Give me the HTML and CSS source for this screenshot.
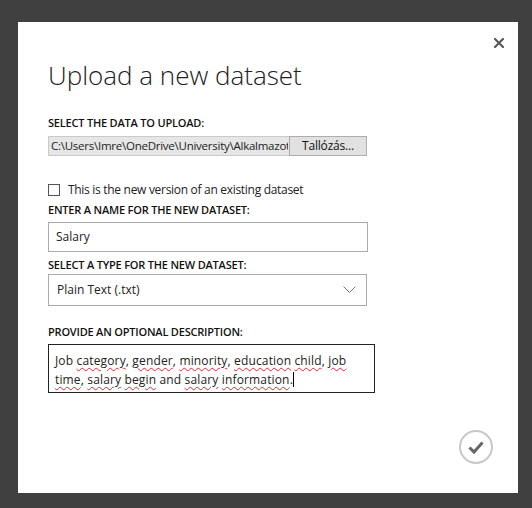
FILE: index.html
```html
<!DOCTYPE html>
<html>
<head>
<meta charset="utf-8">
<link rel="stylesheet" href="styles.css">
</head>
<body>
<div class="dialog">
  <button class="close" aria-label="Close">
    <svg width="10" height="10" viewBox="0 0 10 10"><path d="M1 1L9 9M9 1L1 9" stroke="#5a5a5a" stroke-width="2.2" stroke-linecap="square"/></svg>
  </button>
  <h1 class="title">Upload a new dataset</h1>
  <div class="label first">SELECT THE DATA TO UPLOAD:</div>
  <div class="file-row">
    <div class="file-path"><span class="path-text">C:\Users\Imre\OneDrive\University\Alkalmazott</span></div>
    <div class="browse">Tallózás...</div>
  </div>
  <div class="check-row"><span class="box"></span><span class="check-text">This is the new version of an existing dataset</span></div>
  <div class="label l2">ENTER A NAME FOR THE NEW DATASET:</div>
  <div class="input">Salary</div>
  <div class="label l3">SELECT A TYPE FOR THE NEW DATASET:</div>
  <div class="select"><span>Plain Text (.txt)</span>
    <svg width="13" height="8" viewBox="0 0 13 8"><path d="M0.5 0.5L6.5 6.5L12.5 0.5" fill="none" stroke="#777" stroke-width="1"/></svg>
  </div>
  <div class="label l4">PROVIDE AN OPTIONAL DESCRIPTION:</div>
  <div class="desc">Job <span class="sp">category</span>, <span class="sp">gender</span>, <span class="sp">minority</span>, <span class="sp">education</span> <span class="sp">child</span>, <span class="sp">job</span><br><span class="sp">time</span>, <span class="sp">salary</span> <span class="sp">begin</span> and <span class="sp">salary</span> <span class="sp">information</span>.<span class="caret"></span></div>
  <div class="footer">
    <button class="ok" aria-label="OK">
      <svg width="34" height="34" viewBox="0 0 34 34"><circle cx="17" cy="17" r="16" fill="none" stroke="#c8c8c8" stroke-width="2"/><path d="M10.5 17.5L15 22L23.5 12.5" fill="none" stroke="#666" stroke-width="3"/></svg>
    </button>
  </div>
</div>
</body>
</html>
```
FILE: styles.css
```css
html, body { margin: 0; padding: 0; }
body {
  background: #404040;
  font-family: "Open Sans", "Noto Sans", sans-serif;
  color: #222;
  width: 532px;
  height: 508px;
  overflow: hidden;
}
.dialog {
  position: relative;
  box-sizing: border-box;
  width: 500px;
  height: 471px;
  margin: 22px 0 0 18px;
  background: #fff;
  padding: 37px 25px 0 30px;
  display: flex;
  flex-direction: column;
  align-items: flex-start;
}
.close {
  position: absolute;
  top: 16px;
  left: 476px;
  border: 0;
  background: none;
  padding: 0;
  width: 10px;
  height: 10px;
}
.close svg { display: block; }
.title {
  margin: 0;
  font-weight: 300;
  font-size: 26px;
  line-height: 32px;
  color: #222;
}
.label {
  font-size: 11px;
  font-weight: 600;
  line-height: 14px;
  letter-spacing: -0.2px;
  color: #111;
}
.label.first { margin-top: 25px; }
.label.l2 { margin-top: 6px; }
.label.l3 { margin-top: 6px; }
.label.l4 { margin-top: 19px; }
.file-row {
  margin-top: 6px;
  display: flex;
  height: 20px;
}
.file-path {
  box-sizing: border-box;
  width: 241px;
  height: 20px;
  background: #e6e6e6;
  border: 1px solid #cacaca;
  border-right: 0;
  font-size: 11.5px;
  line-height: 18px;
  padding-left: 2px;
  overflow: hidden;
  color: #222;
}
.path-text {
  display: block;
  width: 237px;
  overflow: hidden;
  white-space: nowrap;
  letter-spacing: -0.25px;
}
.browse {
  box-sizing: border-box;
  width: 78px;
  height: 20px;
  background: #e1e1e1;
  border: 1px solid #adadad;
  font-size: 12px;
  line-height: 18px;
  letter-spacing: -0.2px;
  text-align: center;
  color: #111;
}
.check-row {
  margin-top: 27px;
  display: flex;
  align-items: center;
  font-size: 12px;
  line-height: 14px;
  color: #222;
}
.check-text { letter-spacing: -0.3px; }
.box {
  box-sizing: border-box;
  width: 12px;
  height: 12px;
  border: 1px solid #555;
  margin-right: 8px;
}
.input {
  box-sizing: border-box;
  margin-top: 5px;
  width: 320px;
  height: 30px;
  border: 1px solid #ababab;
  font-size: 12px;
  line-height: 28px;
  padding-left: 7px;
}
.select {
  box-sizing: border-box;
  margin-top: 2px;
  width: 319px;
  height: 32px;
  border: 1px solid #ababab;
  font-size: 12px;
  line-height: 30px;
  padding: 0 10px 0 8px;
  display: flex;
  justify-content: space-between;
  align-items: center;
}
.desc {
  box-sizing: border-box;
  margin-top: 5px;
  width: 327px;
  height: 49px;
  border: 1px solid #222;
  font-size: 12px;
  line-height: 19px;
  letter-spacing: 0.15px;
  padding: 6px 4px 0 6px;
}
.sp {
  text-decoration: underline wavy #e23;
  text-decoration-thickness: 1px;
  text-underline-offset: 2px;
}
.caret {
  display: inline-block;
  width: 1px;
  height: 15px;
  background: #000;
  vertical-align: -3px;
}
.footer {
  margin-top: auto;
  margin-bottom: 24px;
  align-self: flex-end;
}
.ok {
  border: 0;
  background: none;
  padding: 0;
  width: 34px;
  height: 34px;
}
.ok svg { display: block; }
```
